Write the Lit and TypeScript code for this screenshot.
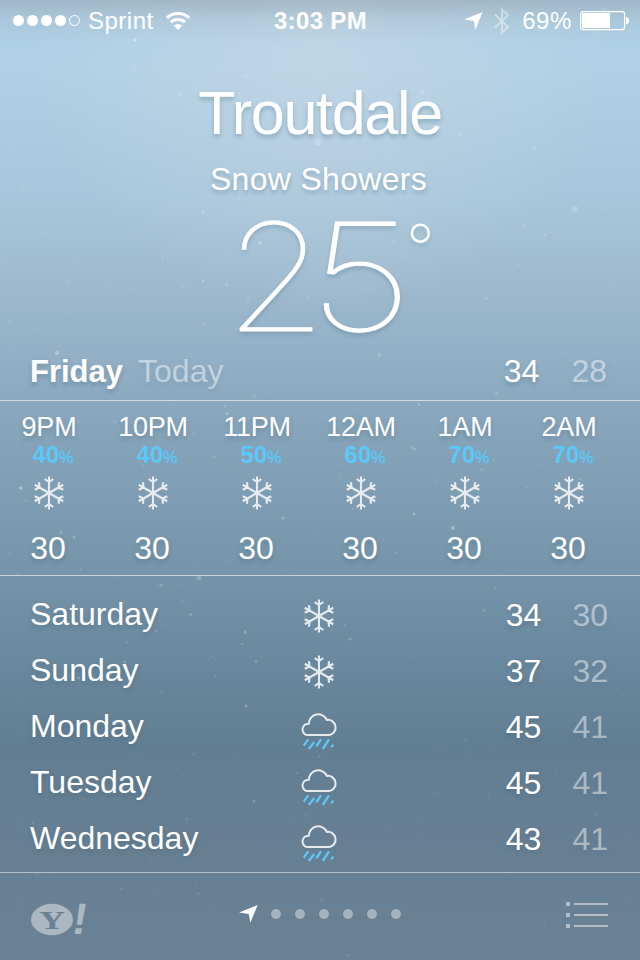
import { LitElement, html, css, svg } from "lit";
import { customElement, property } from "lit/decorators.js";

const snowflake = svg`
  ${[0, 60, 120, 180, 240, 300].map(
    (a) => svg`<path transform="rotate(${a} 18 18)" d="M18 18V1.5M13.7 4L18 7L22.3 4" />`
  )}`;

@customElement("weather-icon")
class WeatherIcon extends LitElement {
  @property() kind = "snow";
  static styles = css`
    :host { display: block; }
    svg { display: block; fill: none; stroke: #e6ebf0; }
    .snow { stroke-width: 2.1; }
    .rain { stroke-width: 2; }
    .drops { stroke: #5ac8fa; stroke-width: 2.3; }
  `;
  render() {
    return this.kind === "snow"
      ? html`<svg class="snow" width="36" height="36" viewBox="0 0 36 36">${snowflake}</svg>`
      : html`<svg class="rain" width="38" height="42" viewBox="0 0 38 42">
          <path d="M7.6 25.1A5.7 5.7 0 0 1 8.8 13.7A9.4 9.4 0 0 1 26.8 9.9A7.65 7.65 0 0 1 29 25.1Z" />
          <path class="drops" d="M8.3 29.3L3.7 35.7M14.3 32L8.7 39M21 29.3L16.3 36.3M29 29.3L22.7 39M33.3 34.7L31 37.3" />
        </svg>`;
  }
}

@customElement("snow-field")
class SnowField extends LitElement {
  static styles = css`
    :host { display: block; }
    svg { display: block; width: 100%; height: 100%; fill: #fff; }
  `;
  render() {
    let seed = 20131;
    const rnd = () => (seed = (seed * 16807) % 2147483647) / 2147483647;
    const flakes = Array.from({ length: 420 }, () => {
      const y = rnd() * 960;
      return { x: rnd() * 640, y, r: 0.6 + rnd() * rnd() * 1.5, o: (0.05 + rnd() * 0.18) * (y > 700 ? 0.5 : 1) };
    });
    const bright = [
      [575, 209, 3, 0.2], [318, 142, 3.5, 0.2], [199, 578, 2.5, 0.2], [260, 243, 1.8, 0.3],
      [21, 488, 1.8, 0.35], [57, 353, 2, 0.3], [453, 528, 2, 0.3], [135, 40, 1.8, 0.35],
      [245, 632, 1.6, 0.25], [246, 706, 1.5, 0.25], [254, 801, 1.6, 0.2], [414, 514, 1.5, 0.3],
    ];
    return html`<svg viewBox="0 0 640 960">
      ${flakes.map((f) => svg`<circle cx=${f.x} cy=${f.y} r=${f.r} opacity=${f.o} />`)}
      ${bright.map(([x, y, r, o]) => svg`<circle cx=${x} cy=${y} r=${r} opacity=${o} />`)}
    </svg>`;
  }
}

const hours = [
  ["9PM", 40], ["10PM", 40], ["11PM", 50], ["12AM", 60], ["1AM", 70], ["2AM", 70],
];
const days = [
  ["Saturday", "snow", 34, 30], ["Sunday", "snow", 37, 32], ["Monday", "rain", 45, 41],
  ["Tuesday", "rain", 45, 41], ["Wednesday", "rain", 43, 41],
];
const arrow = svg`<path d="M18.6 0L0 7.6L9.8 8.9L11.4 17.8Z" />`;

@customElement("app-root")
class AppRoot extends LitElement {
  static styles = css`
    :host {
      display: block; position: relative; width: 640px; height: 960px; overflow: hidden;
      box-sizing: border-box; color: #fff; font-family: "Liberation Sans", Arial, sans-serif;
      white-space: nowrap;
      background:
        linear-gradient(180deg, rgba(150,165,175,.6) 0, rgba(150,165,175,.2) 20px, rgba(150,165,175,0) 45px),
        radial-gradient(ellipse 280px 260px at 50% 50px, rgba(205,219,229,.5), rgba(205,219,229,0)),
        linear-gradient(180deg, #aed0e8 0, #b1d0e5 70px, #a8c6db 200px, #9fbacf 280px, #94b1c7 345px, #86a4ba 430px, #7694aa 570px, #6a889e 660px, #627e93 745px, #677f93 850px, #6a8294 960px);
    }
    svg { display: block; }
    snow-field { position: absolute; inset: 0; }
    .screen { position: relative; display: flex; flex-direction: column; height: 960px; }
    .status { display: grid; grid-template-columns: 1fr auto 1fr; height: 41px; align-items: center; font-size: 24px; line-height: 41px; padding: 0 11px 0 13px; }
    .left, .right { display: flex; align-items: center; }
    .right { justify-content: flex-end; }
    .bars { display: flex; gap: 3px; margin-right: 8px; }
    .bars i { width: 11px; height: 11px; border-radius: 50%; background: #fff; box-sizing: border-box; }
    .bars i:last-child { background: none; border: 1px solid #fff; }
    .carrier { letter-spacing: .5px; margin-right: 11px; }
    .clock { font-weight: bold; letter-spacing: .35px; margin-right: 1px; }
    .loc { margin-right: 11px; fill: #fff; }
    .bt { margin-right: 12px; opacity: .42; fill: none; stroke: #fff; stroke-width: 2; }
    .pct { letter-spacing: .6px; margin-right: 8px; }
    .soft { text-shadow: 0 3px 4px rgba(60, 95, 120, .32); }
    .head { height: 309px; display: flex; flex-direction: column; align-items: center; }
    .city { margin-top: 38px; font-size: 61px; line-height: 68px; letter-spacing: -1.3px; }
    .cond { margin: 12px 3px 0 0; font-size: 32px; line-height: 40px; letter-spacing: .3px; }
    .now { display: flex; align-items: flex-start; margin: 18px 0 0 23px; height: 120px; font-family: Inter, sans-serif; font-weight: 100; }
    .num { display: flex; font-size: 150px; line-height: 120px; letter-spacing: -4px; -webkit-text-stroke: .9px #fff; }
    .two { transform: scaleX(1.09); }
    .five { transform: scaleX(1.23); }
    .deg { font-size: 62px; line-height: 62px; margin-left: 8px; -webkit-text-stroke: 1.1px #fff; }
    .today { display: flex; height: 50px; line-height: 43px; font-size: 32px; padding: 0 33px 0 30px; box-sizing: border-box; }
    .today b { font-size: 31px; margin-right: 15px; }
    .dim { opacity: .45; }
    .today .hi { margin-left: auto; }
    .lo { margin-left: 31px; }
    .today .lo { margin-left: 32px; }
    .hours { display: flex; height: 176px; box-sizing: border-box; border: solid rgba(255,255,255,.6); border-width: 1px 0; padding-right: 19px; margin-left: -3px; }
    .hour { flex: 1; display: flex; flex-direction: column; align-items: center; }
    .time { font-size: 27px; line-height: 30px; margin-top: 11px; letter-spacing: -.2px; }
    .chance { color: #5ac8fa; font-size: 24px; font-weight: bold; line-height: 26px; margin-left: 8px; text-shadow: none; }
    .chance small { font-size: 16px; font-weight: normal; -webkit-text-stroke: .3px #5ac8fa; }
    .hour weather-icon { margin-top: 4px; }
    .deg-h { font-size: 32px; line-height: 36px; margin: 19px 2px 0 0; }
    .days { height: 296px; padding-top: 10px; box-sizing: border-box; }
    .day { display: grid; grid-template-columns: 270px 38px 1fr auto; height: 56px; line-height: 56px; font-size: 32px; padding: 0 32px 0 30px; }
    .day weather-icon { margin-top: 12px; }
    .day weather-icon[data-kind="snow"] { margin: 12px 0 0 1px; }
    .temps { grid-column: 4; display: flex; padding-top: 1px; }
    .foot { flex: 1; border-top: 1px solid rgba(255,255,255,.5); display: flex; justify-content: space-between; padding: 0 32px 0 30px; }
    .yahoo { margin-top: 19px; fill: #abb8c2; }
    .y { fill: #6a8194; font: bold 26px "Liberation Serif", serif; }
    .bang { font: bold 44px "Liberation Sans", sans-serif; }
    .pager { display: flex; gap: 14px; align-items: center; height: 20px; margin: 31px 0 0 -21px; }
    .pager svg { fill: #fff; margin-right: -1px; }
    .pager i { width: 10px; height: 10px; border-radius: 50%; background: #a5b3be; }
    .list { margin-top: 29px; fill: #b3bec8; }
  `;
  render() {
    return html`
      <snow-field></snow-field>
      <div class="screen">
        <div class="status">
          <div class="left">
            <span class="bars"><i></i><i></i><i></i><i></i><i></i></span>
            <span class="carrier">Sprint</span>
            <svg width="26" height="20" viewBox="0 0 26 20" fill="none" stroke="#fff" stroke-width="3">
              <path d="M1.8 6.8A16.6 16.6 0 0 1 24.2 6.8" /><path d="M5.8 11.2A10.6 10.6 0 0 1 20.2 11.2" />
              <path d="M13 19L8.7 14.6A6.4 6.4 0 0 1 17.3 14.6Z" fill="#fff" stroke="none" />
            </svg>
          </div>
          <div class="clock">3:03 PM</div>
          <div class="right">
            <svg class="loc" width="19" height="18" viewBox="0 0 19 18">${arrow}</svg>
            <svg class="bt" width="16" height="28" viewBox="0 0 16 28"><path d="M1 7.5L14 20L8 25.3V2.7L14 8L1 20.5" /></svg>
            <span class="pct">69%</span>
            <svg width="49" height="20" viewBox="0 0 49 20" fill="#fff">
              <rect x=".6" y=".6" width="44" height="18" rx="2.5" fill="none" stroke="#fff" stroke-width="1.2" />
              <rect x="2" y="2" width="28" height="15" /><path d="M46 6a3 3.6 0 0 1 0 7.4Z" />
            </svg>
          </div>
        </div>
        <div class="head soft">
          <div class="city">Troutdale</div>
          <div class="cond">Snow Showers</div>
          <div class="now"><div class="num"><span class="two">2</span><span class="five">5</span></div><span class="deg">°</span></div>
        </div>
        <div class="today soft">
          <b>Friday</b><span class="dim">Today</span><span class="hi">34</span><span class="lo dim">28</span>
        </div>
        <div class="hours soft">
          ${hours.map(([t, p]) => html`<div class="hour">
            <div class="time">${t}</div>
            <div class="chance">${p}<small>%</small></div>
            <weather-icon kind="snow"></weather-icon>
            <div class="deg-h">30</div>
          </div>`)}
        </div>
        <div class="days soft">
          ${days.map(([d, k, h, l]) => html`<div class="day">
            <span>${d}</span><weather-icon data-kind=${k} kind=${k}></weather-icon>
            <div class="temps"><span>${h}</span><span class="lo dim">${l}</span></div>
          </div>`)}
        </div>
        <div class="foot">
          <svg class="yahoo" width="64" height="56" viewBox="0 -10 64 56">
            <ellipse cx="22" cy="17.5" rx="21" ry="15.7" />
            <text class="y" x="9" y="26.5" textLength="26" lengthAdjust="spacingAndGlyphs">Y</text>
            <text class="bang" transform="translate(40.5 31.5) skewX(-9)">!</text>
          </svg>
          <div class="pager">
            <svg width="19" height="18" viewBox="0 0 19 18">${arrow}</svg>
            <i></i><i></i><i></i><i></i><i></i><i></i>
          </div>
          <svg class="list" width="42" height="28" viewBox="0 0 42 28">
            ${[0, 11, 22].map((y) => svg`<rect y=${y} width="4" height="4" /><rect x="8" y=${y + 1} width="34" height="2" />`)}
          </svg>
        </div>
      </div>
    `;
  }
}
